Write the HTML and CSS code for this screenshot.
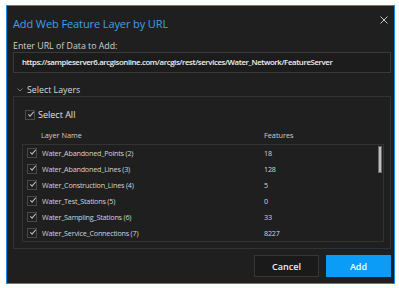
FILE: index.html
```html
<!DOCTYPE html>
<html lang="en">
<head>
  <meta charset="UTF-8" />
  <title>Add Web Feature Layer by URL</title>
  <link rel="stylesheet" href="styles.css">
</head>
<body>
  <div class="dialog">
    <div class="dialog-header">
      <h2>Add Web Feature Layer by URL</h2>
      <svg class="close" width="8" height="8" viewBox="0 0 8 8">
        <path d="M0.5 0.5 L7.5 7.5 M7.5 0.5 L0.5 7.5" stroke="#c8c8c8" stroke-width="1" fill="none"/>
      </svg>
    </div>

    <label class="field-label">Enter URL of Data to Add:</label>
    <div class="url-input">https://sampleserver6.arcgisonline.com/arcgis/rest/services/Water_Network/FeatureServer</div>

    <div class="section-title">
      <svg width="6" height="4" viewBox="0 0 6 4"><path d="M0.5 0.5 L3 3 L5.5 0.5" stroke="#7a7a7a" fill="none"/></svg>
      <span>Select Layers</span>
    </div>

    <div class="group">
      <div class="select-all">
        <span class="check"></span>
        <span>Select All</span>
      </div>
      <div class="table-head">
        <span class="col-name">Layer Name</span>
        <span class="col-count">Features</span>
      </div>
      <div class="list" id="layerList">
        <div class="scrollbar"></div>
      </div>
    </div>

    <div class="actions">
      <button class="btn cancel">Cancel</button>
      <button class="btn add">Add</button>
    </div>
  </div>

  <script>
    const layers = [
      ["Water_Abandoned_Points (2)", 18],
      ["Water_Abandoned_Lines (3)", 128],
      ["Water_Construction_Lines (4)", 5],
      ["Water_Test_Stations (5)", 0],
      ["Water_Sampling_Stations (6)", 33],
      ["Water_Service_Connections (7)", 8227]
    ];
    const list = document.getElementById("layerList");
    layers.forEach(([name, count]) => {
      const row = document.createElement("div");
      row.className = "row";
      row.innerHTML = `<span class="check"></span><span class="col-name">${name}</span><span class="col-count">${count}</span>`;
      list.appendChild(row);
    });
  </script>
</body>
</html>
```

FILE: styles.css
```css
body {
  margin: 0;
  padding: 5px 0 0 6px;
  background: #fff;
  font-family: "Open Sans", "Noto Sans", sans-serif;
}

.dialog {
  box-sizing: border-box;
  width: 389px;
  height: 279px;
  background: #1f1f1f;
  border: 1px solid #1b8de2;
  padding: 0 3px 0 6px;
  color: #d6d6d6;
}

.dialog-header {
  display: flex;
  justify-content: space-between;
  align-items: center;
  height: 34px;
}

.dialog-header h2 {
  margin: 0;
  font-size: 11px;
  line-height: 14px;
  font-weight: normal;
  color: #3ba2ec;
  letter-spacing: -0.1px;
  padding-top: 2px;
}

.close {
  margin: -7px 3px 0 0;
}

.field-label {
  display: block;
  font-size: 8.8px;
  line-height: 12px;
  color: #d0d0d0;
}

.url-input {
  box-sizing: border-box;
  width: 378px;
  height: 21px;
  border: 1px solid #3a3a3a;
  background: #1c1c1c;
  padding-left: 8px;
  font-size: 7.8px;
  font-weight: 600;
  line-height: 19px;
  letter-spacing: -0.38px;
  color: #f2f2f2;
  white-space: nowrap;
  overflow: hidden;
}

.section-title {
  display: flex;
  align-items: center;
  gap: 4px;
  height: 12px;
  padding: 11px 0 0 4px;
  font-size: 8.8px;
  color: #d8d8d8;
}

.group {
  box-sizing: border-box;
  width: 378px;
  height: 153px;
  border: 1px solid #333;
  padding: 12px 0 0 8px;
}

.select-all {
  display: flex;
  align-items: center;
  gap: 3px;
  height: 11px;
  padding-left: 3px;
  font-size: 9px;
  color: #e0e0e0;
}

.check {
  box-sizing: border-box;
  width: 10px;
  height: 10px;
  border: 1px solid #4a4a4a;
  position: relative;
  flex: none;
}

.check::after {
  content: "";
  position: absolute;
  left: 2px;
  top: 1px;
  width: 5px;
  height: 2px;
  border-left: 1px solid #bdbdbd;
  border-bottom: 1px solid #bdbdbd;
  transform: rotate(-48deg);
}

.table-head {
  display: flex;
  align-items: center;
  box-sizing: border-box;
  height: 24px;
  padding-top: 6px;
  font-size: 7.3px;
  color: #d0d0d0;
}

.table-head .col-name {
  padding-left: 19px;
  width: 223px;
}

.list {
  position: relative;
  box-sizing: border-box;
  width: 362px;
  height: 98px;
  border: 1px solid #333;
}

.row {
  display: flex;
  align-items: center;
  height: 16px;
  padding-left: 4px;
  font-size: 7.2px;
  letter-spacing: -0.2px;
  color: #d4d4d4;
}

.row .col-name {
  margin-left: 5px;
  width: 222px;
}

.scrollbar {
  position: absolute;
  right: 1px;
  top: 1px;
  box-sizing: border-box;
  width: 4px;
  height: 27px;
  background: #bdbdbd;
  border: 1px solid #6e6e6e;
}

.actions {
  display: flex;
  justify-content: flex-end;
  gap: 7px;
  margin-top: 6px;
}

.btn {
  width: 65px;
  height: 22px;
  font-family: inherit;
  font-size: 9px;
  font-weight: 600;
  border-radius: 0;
  cursor: pointer;
}

.cancel {
  background: #1a1a1a;
  border: 1px solid #363636;
  color: #f0f0f0;
}

.add {
  background: #0b9cf8;
  border: 1px solid #0b9cf8;
  color: #fff;
}
```
